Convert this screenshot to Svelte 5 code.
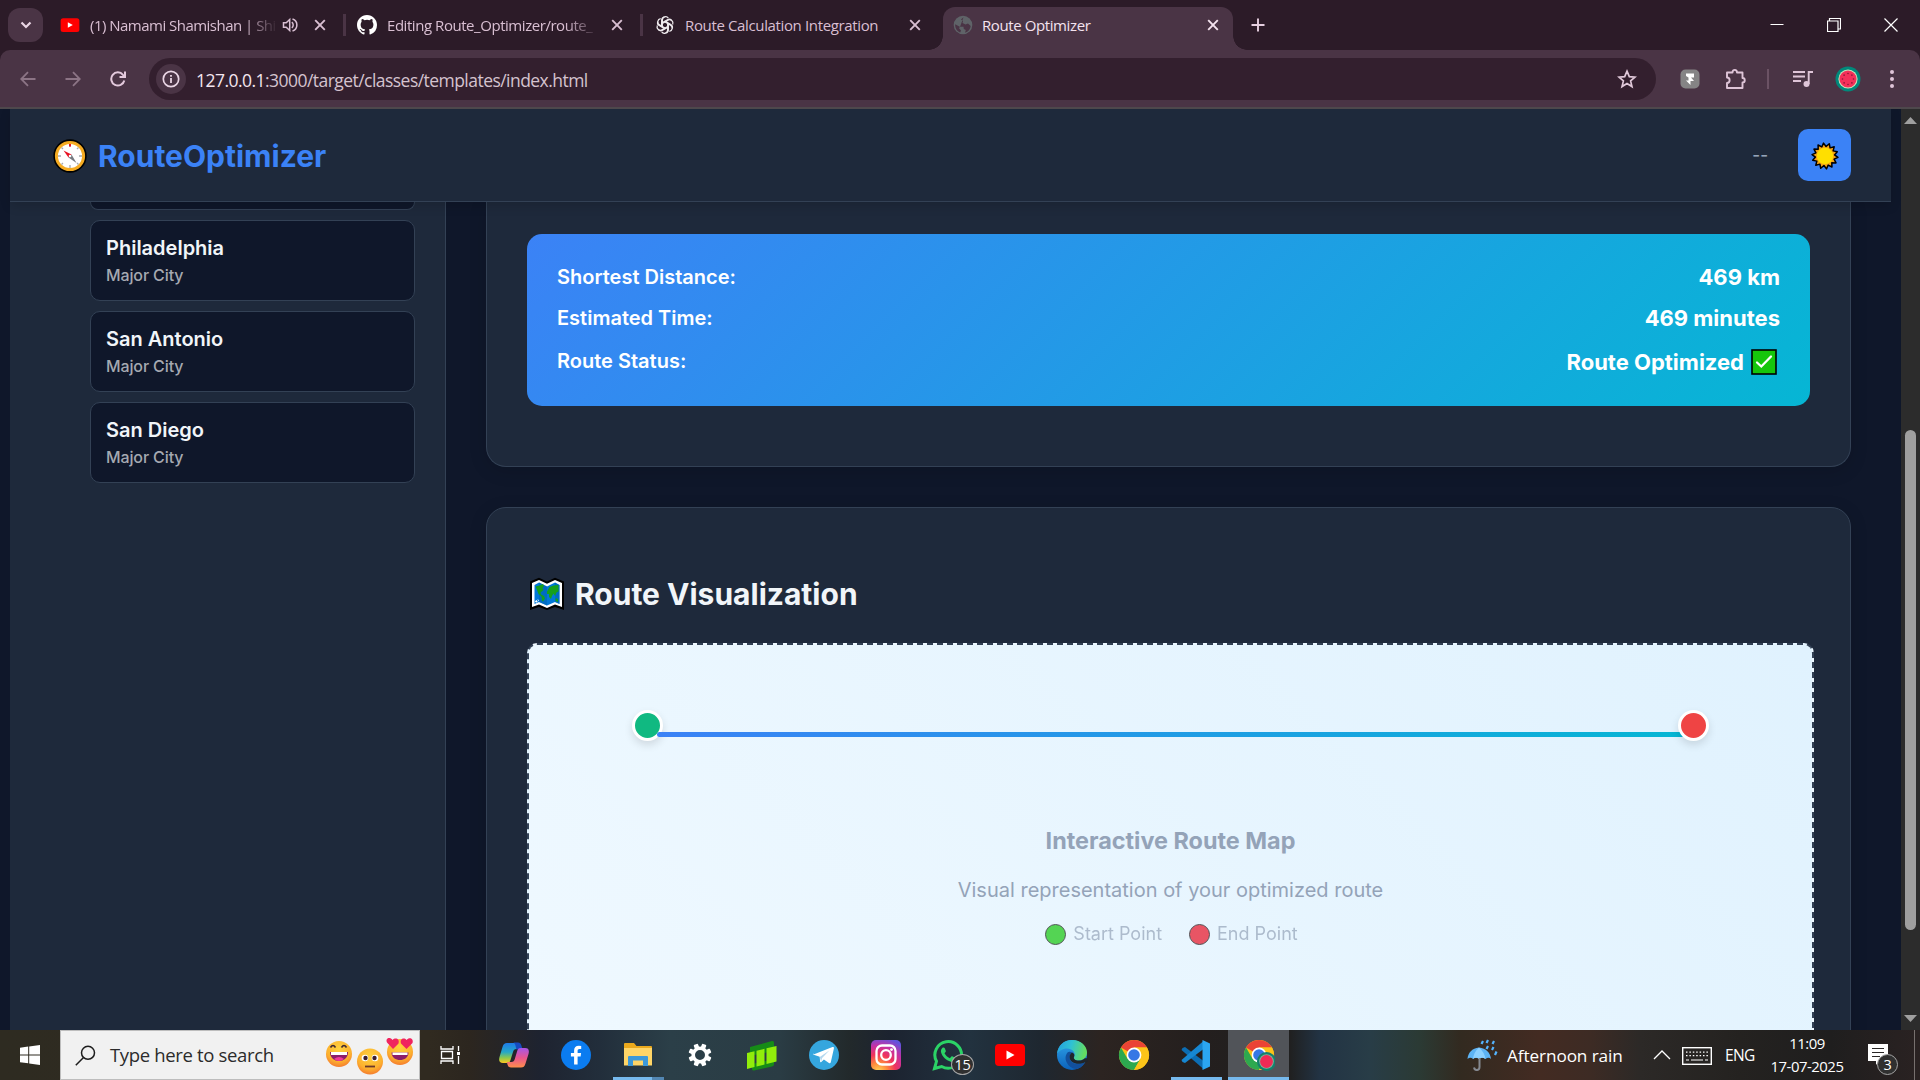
<script>
  const tabs = [
    { icon: 'youtube', title: '(1) Namami Shamishan | Shi', audio: true, width: 297, fade: true },
    { icon: 'github', title: 'Editing Route_Optimizer/route_', width: 297, fade: true },
    { icon: 'openai', title: 'Route Calculation Integration', width: 300 }
  ];
  const cities = ['Philadelphia', 'San Antonio', 'San Diego'];
  const results = [
    { label: 'Shortest Distance:', value: '469 km' },
    { label: 'Estimated Time:', value: '469 minutes' },
    { label: 'Route Status:', value: 'Route Optimized', done: true }
  ];
  const apps = ['copilot', 'facebook', 'explorer', 'gear', 'bars', 'telegram', 'instagram', 'whatsapp', 'youtube', 'edge', 'chrome', 'vscode', 'chromeProfile'];
  const teeth = [0, 45, 90, 135, 180, 225, 270, 315];
  const petals = [0, 60, 120, 180, 240, 300];
  const seeds = [0, 45, 90, 135, 180, 225, 270, 315];
  const sunPoints = Array.from({ length: 28 }, (_, i) => {
    const r = i % 2 ? 9.6 : 13;
    const a = (i * Math.PI) / 14 + 0.11;
    return `${(14 + r * Math.cos(a)).toFixed(2)},${(14 + r * Math.sin(a)).toFixed(2)}`;
  }).join(' ');
</script>

{#snippet closeIcon()}
  <svg class="close" width="12" height="12" viewBox="0 0 12 12"><path d="M1.200 1.200l9.600 9.600M10.800 1.200l-9.600 9.600" stroke="currentColor" stroke-width="1.900" /></svg>
{/snippet}

{#snippet chromeShape()}
  <circle cx="16" cy="16" r="15" fill="#fbc116" />
  <path d="M16 16L3 8.500A15 15 0 0 1 29 8.500H16Z" fill="#ea4335" />
  <path d="M3 8.500A15 15 0 0 0 16 31L22.500 19.700L16 16L9.500 19.700Z" fill="#2da94f" />
  <path d="M16 31A15 15 0 0 0 29 8.500H16L22.500 19.700Z" fill="#fcc419" />
  <circle cx="16" cy="16" r="7.400" fill="#fff" />
  <circle cx="16" cy="16" r="5.800" fill="#3578e5" />
{/snippet}

{#snippet icon(name)}
  {#if name === 'youtube'}
    <svg viewBox="0 0 32 32"><rect x="1" y="5" width="30" height="22" rx="4" fill="#f00" /><path d="M12.500 11.500v9l8-4.500z" fill="#fff" /></svg>
  {:else if name === 'github'}
    <svg viewBox="0 0 16 16"><path fill="#fff" d="M8 0C3.580 0 0 3.580 0 8c0 3.540 2.290 6.530 5.470 7.590.4.070.55-.17.55-.38 0-.19-.01-.82-.01-1.490-2.010.37-2.530-.49-2.690-.94-.09-.23-.48-.94-.82-1.130-.28-.15-.68-.52-.01-.53.63-.01 1.080.58 1.230.82.72 1.210 1.870.87 2.330.66.07-.52.28-.87.51-1.070-1.780-.2-3.640-.89-3.640-3.950 0-.87.31-1.590.82-2.150-.08-.2-.36-1.020.08-2.120 0 0 .67-.21 2.200.82a7.600 7.600 0 0 1 4 0c1.530-1.040 2.200-.82 2.200-.82.44 1.100.16 1.920.08 2.120.51.56.82 1.270.82 2.150 0 3.070-1.870 3.750-3.650 3.950.29.25.54.73.54 1.480 0 1.070-.01 1.930-.01 2.200 0 .21.15.46.55.38A8 8 0 0 0 16 8c0-4.420-3.580-8-8-8z" /></svg>
  {:else if name === 'openai'}
    <svg viewBox="0 0 24 24"><g fill="none" stroke="#f0ecef" stroke-width="1.500">
      {#each petals as a (a)}<path transform="rotate({a} 12 12)" d="M8.800 13.800V6.200a4 4 0 0 1 7.200-2.500M9.500 8.800l5.400-3.100a4 4 0 0 1 5 .8" />{/each}
    </g></svg>
  {:else if name === 'globe'}
    <svg viewBox="0 0 20 20"><circle cx="10" cy="10" r="9.300" fill="#5f6368" /><path d="M10.500 2.300L8 4.500l2 1.500-.5 2 3 1.500 2.500-1 2.700 2.500A8 8 0 0 1 12 17.700l.8-2.700-2-1-.3-2.300H6.800L2.200 9.300c-.4 4 2 7 5 8.200l.8-2L6 13.300l1-1.600" fill="#4a3445" /></svg>
  {:else if name === 'copilot'}
    <svg viewBox="0 0 32 32">
      <defs>
        <linearGradient id="cpA" x1="0" y1="0" x2="0" y2="1"><stop offset="0" stop-color="#1f7be8" /><stop offset=".45" stop-color="#24a7c9" /><stop offset=".75" stop-color="#8fc94b" /><stop offset="1" stop-color="#ffc81f" /></linearGradient>
        <linearGradient id="cpB" x1="0" y1="0" x2="0" y2="1"><stop offset="0" stop-color="#a656e8" /><stop offset=".5" stop-color="#e8558f" /><stop offset="1" stop-color="#ff8e4a" /></linearGradient>
      </defs>
      <path d="M9 4h10c2 0 3 1 3.500 3l1 3h-5c-2 0-3 1-3.500 3l-2.500 8c-.5 2-1.500 3-3.500 3H5c-3.500 0-4.500-2-3.500-6L4.500 8C5.500 5 6.500 4 9 4z" fill="url(#cpA)" />
      <path d="M17 3.500h3c2 0 3 1.500 3.500 3.500l1 3-6 .5c-1-3-.5-5-3-7z" fill="#174bc1" />
      <path d="M23 28.500H13c-2 0-3-1-3.500-3l-.7-2.500h4.500c2 0 3-1 3.500-3l2.400-8c.5-2 1.500-3 3.500-3H27c3.500 0 4.500 2 3.500 6l-3 9.500c-1 3-2 4-4.500 4z" fill="url(#cpB)" />
    </svg>
  {:else if name === 'facebook'}
    <svg viewBox="0 0 32 32"><circle cx="16" cy="16" r="15" fill="#0b7cf0" /><path d="M17.600 25.500v-8h3l.5-3.500h-3.500v-2.200c0-1.200.5-1.900 1.900-1.900h1.700V7a15 15 0 0 0-2.400-.2c-3 0-4.700 1.700-4.700 4.600V14h-3.200v3.500h3.200v8z" fill="#fff" /></svg>
  {:else if name === 'explorer'}
    <svg viewBox="0 0 32 32"><path d="M2 5q0-1 1-1h9l2.500 3H29q1 0 1 1v18H2z" fill="#eba91d" /><path d="M2 9h28v17.500H2z" fill="#ffd567" /><path d="M7 17h18q1 0 1 1v9h-5v-5.500H11V27H6v-9q0-1 1-1z" fill="#3c98d9" /></svg>
  {:else if name === 'gear'}
    <svg viewBox="0 0 32 32"><g fill="#fff">{#each teeth as a (a)}<rect x="13.700" y="4.500" width="4.600" height="5.500" rx="1" transform="rotate({a + 22.5} 16 16)" />{/each}</g><circle cx="16" cy="16" r="6.800" fill="none" stroke="#fff" stroke-width="3.600" /></svg>
  {:else if name === 'bars'}
    <svg viewBox="0 0 32 32"><path d="M4 8L26 2q2-.5 2 1.500V12L4 17zM6 25l22-5v5.500q0 1.500-2 2L8 31.500q-2 .3-2-1.500z" fill="#168b17" /><path d="M1 14l7.500-1.800V28L1 30zM10.500 11.700l8-1.900V25.500l-8 2zM20.500 9.300L30.500 7v15.500l-10 2.500z" fill="#91ed0b" /></svg>
  {:else if name === 'telegram'}
    <svg viewBox="0 0 32 32"><circle cx="16" cy="16" r="15" fill="#35a6de" /><path d="M5.500 15.500L24.500 8c1-.4 1.700.3 1.400 1.500l-3.100 13.700c-.3 1.100-1 1.300-1.900.8l-5-3.600-2.600 2.500c-.7.600-1.100.3-1.200-.5l-.4-4.600-6-2c-1-.3-1-1-.2-1.300z" fill="#fff" /><path d="M11.800 17.900l9.800-6.600-7.500 7.800-1 3.500z" fill="#b4d8ee" /></svg>
  {:else if name === 'instagram'}
    <svg viewBox="0 0 32 32"><defs><radialGradient id="ig" cx=".25" cy="1.050" r="1.150"><stop offset="0" stop-color="#ffd957" /><stop offset=".25" stop-color="#ff8b3d" /><stop offset=".5" stop-color="#f0345c" /><stop offset=".75" stop-color="#c431a5" /><stop offset="1" stop-color="#6154dd" /></radialGradient></defs><rect x="1" y="1" width="30" height="30" rx="5" fill="url(#ig)" /><rect x="6.500" y="6.500" width="19" height="19" rx="5.500" fill="none" stroke="#fff" stroke-width="2.300" /><circle cx="16" cy="16" r="4.800" fill="none" stroke="#fff" stroke-width="2.300" /><circle cx="21.500" cy="10.600" r="1.400" fill="#fff" /></svg>
  {:else if name === 'whatsapp'}
    <svg viewBox="0 0 32 32"><path d="M2.500 29.500l2-7.200A13.300 13.300 0 1 1 9.600 27.500z" fill="none" stroke="#2bd366" stroke-width="3" /><path d="M10.500 8.800c.7-.6 1.900-.5 2.300.4l1 2.500c.2.500 0 1-.3 1.400l-1 1.200c1.200 2.300 3 3.900 5.300 5l1.400-1.600c.4-.5.9-.6 1.500-.3l2.600 1.300c.6.300.7.7.5 1.400-.6 2-2.300 3.100-4.300 2.800-5-.9-9.700-5.600-10.500-9.800-.3-1.700.3-3.200 1.500-4.300z" fill="#2bd366" /></svg>
  {:else if name === 'edge'}
    <svg viewBox="0 0 32 32"><defs><linearGradient id="edA" x1="0" y1="0" x2="1" y2=".2"><stop offset="0" stop-color="#239ee0" /><stop offset=".5" stop-color="#2fc1d4" /><stop offset="1" stop-color="#63dc62" /></linearGradient><linearGradient id="edB" x1="0" y1="0" x2="0" y2="1"><stop offset="0" stop-color="#31a5ea" /><stop offset="1" stop-color="#0b62bb" /></linearGradient></defs><circle cx="16" cy="16" r="15" fill="url(#edB)" /><path d="M1 15C2 6 8 1 16 1c9 0 15 6 15 12.500 0 5-3.800 8-8.500 8-4 0-5.500-1.500-4.500-3.300 2.500-4.700-2-8.700-7-8.700C6.500 9.500 2.500 12 1 15z" fill="url(#edA)" /><path d="M11.500 13.500c-5 6 .5 16 9 16.500 4-1.200 6.700-3.500 8.500-6.800-7 4-15.500 1-15.500-5 0-2.200 1-3.500 2.700-4.700-1.700-1-3.700-1-4.700 0z" fill="#124f9c" /><path d="M18.300 17c-1.500 2.800.8 4.600 4.500 4.600 2.400 0 4.500-.8 6-2.300l3.200 0 0 3.500-3 .4c-6.500 3.500-15.500 1-15.500-5.200 0-2 1-3.500 2.700-4.500 1.700.8 2.500 2 2.100 3.500z" fill="#20252a" /></svg>
  {:else if name === 'chrome'}
    <svg viewBox="0 0 32 32">{@render chromeShape()}</svg>
  {:else if name === 'vscode'}
    <svg viewBox="0 0 32 32"><path d="M2.500 9L5 8l18.500 14v8L1.500 11z" fill="#0c6db3" /><path d="M2.500 23L5 24l18.500-14V2L1.500 21z" fill="#1687d2" /><path d="M22.500 1l7.500 3.500v23L22.500 31z" fill="#2ba6f1" /></svg>
  {:else if name === 'chromeProfile'}
    <svg viewBox="0 0 32 32">{@render chromeShape()}<circle cx="23.500" cy="22.500" r="9.500" fill="#14806d" /><circle cx="23.500" cy="22.500" r="7.300" fill="#7fb89a" /><circle cx="23.500" cy="22.500" r="6.400" fill="#f02a55" /></svg>
  {/if}
{/snippet}

<div class="screen">
  <div class="tabstrip">
    <div class="search-tabs">
      <svg width="12" height="8" viewBox="0 0 12 8"><path d="M1.500 1.500L6 6l4.500-4.500" fill="none" stroke="#ead6e5" stroke-width="2.200" /></svg>
    </div>
    <div class="tabs">
      {#each tabs as tab (tab.title)}
        <div class="tab" style:width="{tab.width}px">
          <span class="favicon">{@render icon(tab.icon)}</span>
          <span class="tab-title" class:fade={tab.fade}>{tab.title}</span>
          {#if tab.audio}
            <svg class="audio" width="16" height="16" viewBox="0 0 16 16"><path d="M1.500 5.800h2.700L7.700 2.500v11L4.200 10.200H1.500z" fill="none" stroke="#d9bfd2" stroke-width="1.500" /><path d="M9.800 5.200a3.500 3.500 0 0 1 0 5.600M10.500 2a6.300 6.300 0 0 1 0 12" fill="none" stroke="#d9bfd2" stroke-width="1.500" /></svg>
          {/if}
          {@render closeIcon()}
        </div>
      {/each}
      <div class="tab active">
        <span class="favicon">{@render icon('globe')}</span>
        <span class="tab-title">Route Optimizer</span>
        {@render closeIcon()}
      </div>
    </div>
    <svg class="plus" width="14" height="14" viewBox="0 0 14 14"><path d="M7 .5v13M.5 7h13" stroke="#e6cfe0" stroke-width="1.900" /></svg>
    <div class="window-controls">
      <svg width="14" height="14" viewBox="0 0 14 14"><path d="M.5 6.500h13" stroke="#fff" /></svg>
      <svg width="14" height="14" viewBox="0 0 14 14"><path d="M.5 3h10.500v10.500H.5zM2.500 3V.5h11V11H11" fill="none" stroke="#fff" stroke-width="1.200" /></svg>
      <svg width="14" height="14" viewBox="0 0 14 14"><path d="M.5 .5l13 13M13.500 .5l-13 13" stroke="#fff" stroke-width="1.200" /></svg>
    </div>
  </div>

  <div class="toolbar">
    <div class="nav">
      <svg width="16" height="16" viewBox="0 0 16 16"><path d="M15.500 8H1.500M8 1.200L1.200 8 8 14.800" fill="none" stroke="#8c7485" stroke-width="1.800" /></svg>
      <svg width="16" height="16" viewBox="0 0 16 16"><path d="M.5 8h14M8 1.200L14.800 8 8 14.800" fill="none" stroke="#8c7485" stroke-width="1.800" /></svg>
      <svg width="16" height="16" viewBox="0 0 16 16"><path d="M14.300 9.500A6.600 6.600 0 1 1 13 3.800L15 6M15 .5V6H9.500" fill="none" stroke="#e3c9dc" stroke-width="2" /></svg>
    </div>
    <div class="omnibox">
      <span class="info"><svg width="18" height="18" viewBox="0 0 18 18"><circle cx="9" cy="9" r="7.700" fill="none" stroke="#ead6e5" stroke-width="1.700" /><path d="M9 8v5M9 5v1.700" stroke="#ead6e5" stroke-width="1.800" /></svg></span>
      <span class="url"><b>127.0.0.1</b>:3000/target/classes/templates/index.html</span>
      <svg class="star" width="20" height="20" viewBox="0 0 20 20"><path d="M10 2.200l2.300 5.400 5.700.5-4.400 3.800 1.400 5.700-5-3-5 3 1.400-5.700L2 8.100l5.700-.5z" fill="none" stroke="#e0c8d9" stroke-width="1.700" /></svg>
    </div>
    <div class="actions">
      <svg width="20" height="20" viewBox="0 0 20 20"><rect x=".5" y=".5" width="19" height="19" rx="5" fill="#858485" /><path d="M6 4.500h8v4h-3l3 3.500h-3.500v4L6 11.500h2.500V8.500L6 7z" fill="#fff" /></svg>
      <svg width="22" height="22" viewBox="0 0 22 22"><path d="M2 4.500h5.500c0-3.500 4.500-3.500 4.500 0h5.500v5.500c3 0 3 4.500 0 4.500V20H2v-5c3.500 0 3.500-5.500 0-5.500z" fill="none" stroke="#dfc5d8" stroke-width="1.900" stroke-linejoin="round" /></svg>
      <span class="divider"></span>
      <svg width="20" height="18" viewBox="0 0 20 18"><path d="M0 2h12M0 6.500h12M0 11h8" stroke="#dfc5d8" stroke-width="1.900" /><path d="M15.700 14V2H20" fill="none" stroke="#dfc5d8" stroke-width="1.900" /><circle cx="13.500" cy="14" r="3" fill="#dfc5d8" /></svg>
      <svg width="26" height="26" viewBox="0 0 26 26"><circle cx="13" cy="13" r="12.500" fill="#00897b" /><circle cx="13" cy="13" r="9.600" fill="#c9e6bd" /><circle cx="13" cy="13" r="8.600" fill="#f4305a" /><g fill="#8d1838">{#each seeds as a (a)}<circle cx="13" cy="7.500" r=".8" transform="rotate({a} 13 13)" />{/each}</g></svg>
      <svg width="6" height="20" viewBox="0 0 6 20"><g fill="#dfc5d8"><circle cx="3" cy="3" r="2" /><circle cx="3" cy="10" r="2" /><circle cx="3" cy="17" r="2" /></g></svg>
    </div>
  </div>

  <div class="viewport">
    <div class="page">
      <header>
        <div class="logo">
          <svg width="34" height="34" viewBox="0 0 34 34"><circle cx="17" cy="17" r="16.700" fill="#000" /><circle cx="17" cy="17" r="13.600" fill="#fff" stroke="#f5ab22" stroke-width="3" /><path d="M17 5v3M17 26v3M5 17h3M26 17h3M8.500 8.500l1.500 1.500M24 24l1.500 1.500M8.500 25.500L10 24M24 10l1.500-1.500" stroke="#a5a9b0" stroke-width="1.300" /><path d="M17 5v2.500" stroke="#e81224" stroke-width="2" /><path d="M10.500 11.500l8 4-3 3z" fill="#e81224" /><path d="M23.500 24l-8-5.500 3-3z" fill="#777b82" /><circle cx="17" cy="17" r="1.300" fill="#fff" /></svg>
          <span>RouteOptimizer</span>
        </div>
        <div class="header-right">
          <span class="status">--</span>
          <button aria-label="Toggle theme"><svg width="28" height="28" viewBox="0 0 28 28"><polygon points={sunPoints} fill="#f7a516" stroke="#000" stroke-width="1.500" stroke-linejoin="round" /><circle cx="14" cy="14" r="8.200" fill="#ffdf00" /></svg></button>
        </div>
      </header>

      <div class="columns">
        <aside>
          <div class="city clipped"></div>
          {#each cities as city (city)}
            <div class="city"><strong>{city}</strong><span>Major City</span></div>
          {/each}
        </aside>
        <main>
          <section class="card first">
            <div class="results">
              {#each results as row (row.label)}
                <div class="row" class:tall={row.done}>
                  <span class="label">{row.label}</span>
                  <span class="value">{row.value}{#if row.done}<svg width="26" height="26" viewBox="0 0 26 26"><rect x="1" y="1" width="24" height="24" fill="#16c60c" stroke="#000" stroke-width="1.600" /><path d="M6 13.500l4.300 4L20 7.500" fill="none" stroke="#fff" stroke-width="2.300" stroke-linecap="round" /></svg>{/if}</span>
                </div>
              {/each}
            </div>
          </section>
          <section class="card second">
            <h2>
              <svg width="34" height="34" viewBox="0 0 34 34"><path d="M0 4.500L9 .8l8 3.700L25 .8l9 3.700V33l-9-3-8 3-8-3-9 3z" fill="#000" /><path d="M2 6l7-3 8 3.800L25 3l7 3v24l-7-2.500L17 31l-8-3.500L2 30z" fill="#fff" /><path d="M4.500 8L9 5.500l8 4v19L9 25l-4.500 2zM25 5.500L29.500 8v19L25 25l-8 3.500v-19z" fill="#0078d7" /><path d="M9 5.500l8 4v19L9 25zM25 5.500L29.500 8v19L25 25z" fill="#0063b1" opacity=".55" /><path d="M5.500 9.500l4-1 3.500-1.500 1 2-1.500 2 1 2-3 2.500.5 2 3 1.500 1 2.500-2 3-1-1-.5-4-3-2.500-1.500-4zM17 14.500l2.500-4.500 4-1.500 5-.5v6.500l-2 1-1.500 3.500-1.500-2.500-1.500 2.500-1 3-2-2v-3h-2z" fill="#16a01b" /><path d="M25.500 21l2.500 1v3l-2.500-1z" fill="#16a01b" /><path d="M5.500 25l3-2" stroke="#fff" stroke-width="2" stroke-dasharray="2 1" /></svg>
              <span>Route Visualization</span>
            </h2>
            <div class="map">
              <div class="pin start"></div>
              <div class="route-line"></div>
              <div class="pin end"></div>
              <div class="map-copy">
                <h3>Interactive Route Map</h3>
                <p>Visual representation of your optimized route</p>
                <div class="legend">
                  <span><i class="dot green"></i>Start Point</span>
                  <span><i class="dot red"></i>End Point</span>
                </div>
              </div>
            </div>
          </section>
        </main>
      </div>
    </div>
    <div class="scrollbar">
      <svg width="13" height="7" viewBox="0 0 13 7"><path d="M0 7L6.500 0 13 7z" fill="#9f9f9f" /></svg>
      <div class="thumb"></div>
      <svg width="13" height="7" viewBox="0 0 13 7"><path d="M0 0l6.500 7L13 0z" fill="#9f9f9f" /></svg>
    </div>
  </div>

  <div class="taskbar">
    <div class="winstart"><svg width="20" height="20" viewBox="0 0 20 20"><path d="M0 2.700L8.200 1.600v7.800H0zM9.200 1.500L20 0v9.400H9.200zM0 10.400h8.200v7.900L0 17.200zM9.200 10.400H20V20L9.200 18.400z" fill="#fff" /></svg></div>
    <div class="search">
      <svg width="21" height="21" viewBox="0 0 21 21"><circle cx="13" cy="7.800" r="6.500" fill="none" stroke="#1d1d1d" stroke-width="1.500" /><path d="M8.300 12.700L.8 20.200" stroke="#1d1d1d" stroke-width="1.500" /></svg>
      <span>Type here to search</span>
      <svg class="faces" width="90" height="40" viewBox="0 0 90 40">
        <defs><radialGradient id="face" cx=".5" cy=".3" r=".8"><stop offset="0" stop-color="#ffd23e" /><stop offset=".6" stop-color="#fcb12f" /><stop offset="1" stop-color="#f2662e" /></radialGradient></defs>
        <circle cx="14" cy="19" r="13" fill="url(#face)" /><path d="M5.500 12.500q2.500-4 5 0M16.500 12.500q2.500-4 5 0" fill="none" stroke="#402a32" stroke-width="1.600" /><path d="M5 17h18c0 12-18 12-18 0z" fill="#8b1d6b" /><path d="M6 17h16v3H6z" fill="#fff" /><path d="M9 24q5-4 10 0-5 4-10 0z" fill="#f0389a" />
        <circle cx="45" cy="26.500" r="13" fill="url(#face)" /><circle cx="40" cy="23" r="3.300" fill="#fff" /><circle cx="50" cy="23" r="3.300" fill="#fff" /><circle cx="40.500" cy="23" r="2.200" fill="#3b2030" /><circle cx="49.500" cy="23" r="2.200" fill="#3b2030" /><path d="M40 31.500h10" stroke="#6b3929" stroke-width="1.800" />
        <circle cx="75" cy="17" r="13" fill="url(#face)" /><path d="M66.500 17.500h17c0 10-17 10-17 0z" fill="#8b1d6b" /><path d="M67.500 17.500h15v2.500h-15z" fill="#fff" /><path d="M68 14L62 7.500C60 3 65 1.500 67.500 5c3-3 7.500-1 6 3.500zM81.500 14L76 8.500C74.500 4 79 2 81.500 5c3-3.500 7.500-1 6 3z" fill="#f0245f" />
      </svg>
    </div>
    <div class="taskview"><svg width="21" height="20" viewBox="0 0 21 20"><path d="M1 1v3h12V1M1 19v-3h12v3M1.500 6.500h11v7h-11zM18.500 1v5M18.500 11v8" fill="none" stroke="#fff" stroke-width="1.300" /><rect x="17" y="7" width="3" height="3" fill="#fff" /></svg></div>
    {#each apps as app (app)}
      <div class="app {app}">
        {@render icon(app)}
        {#if app === 'whatsapp'}<span class="badge">15</span>{/if}
      </div>
    {/each}
    <div class="tray">
      <div class="weather">
        <svg width="32" height="32" viewBox="0 0 32 32"><path d="M12 8.500C5 9 1 14 .5 20q3-2.500 5.500 0 3-2.500 6 0 3-2.500 6.500 0 3-2.500 5.500 0C23.500 14 19 9 12 8.500z" fill="#5db3f4" /><path d="M12 8.500C8 12 6.500 16 6 20q3-2.500 6 0 3-2.500 6.500 0C18 16 16 12 12 8.500z" fill="#8cd0ff" /><path d="M12.500 19v9c0 4-5 4-5.500.5" fill="none" stroke="#858990" stroke-width="2" /><path d="M16 2l-1.500 3M21 1l-1.500 3M27 2l-1.500 3M21 7l-1.500 3M26.500 8L25 11M29.500 12.500L28 16" stroke="#54b4ff" stroke-width="2.200" /></svg>
        <span>Afternoon rain</span>
      </div>
      <svg class="chevron" width="18" height="10" viewBox="0 0 18 10"><path d="M1 9l8-8 8 8" fill="none" stroke="#fff" stroke-width="1.300" /></svg>
      <svg class="keyboard" width="30" height="18" viewBox="0 0 30 18"><rect x=".7" y=".7" width="28.600" height="16.600" fill="none" stroke="#fff" stroke-width="1.400" /><path d="M4 5.200h22M4 8.700h22" stroke="#fff" stroke-width="1.200" stroke-dasharray="1.500 1.900" /><path d="M4 13h3M9 13h12M23 13h3" stroke="#fff" stroke-width="1.200" /></svg>
      <span class="lang">ENG</span>
      <div class="clock"><span>11:09</span><span>17-07-2025</span></div>
      <div class="notify">
        <svg width="20" height="22" viewBox="0 0 20 22"><path d="M0 0h20v17h-9l-3 4v-4H0z" fill="#fff" /><path d="M4 4.500h12M4 8.500h12M4 12.500h8" stroke="#292626" stroke-width="1.200" /></svg>
        <span class="badge">3</span>
      </div>
      <span class="desktop-edge"></span>
    </div>
  </div>
</div>

<style>
  :global(body) { overflow: hidden; background: #0f172a; }
  .screen { width: 1920px; height: 1080px; display: flex; flex-direction: column; overflow: hidden; font-family: 'Open Sans', 'Noto Sans', sans-serif; }
  .screen * { box-sizing: border-box; }
  svg { display: block; flex: none; }

  .tabstrip { position: relative; z-index: 1; height: 50px; flex: none; display: flex; align-items: center; padding-left: 8px; background: #2c1b28; }
  .search-tabs { width: 35px; height: 34px; border-radius: 12px; background: #4a3445; display: flex; align-items: center; justify-content: center; }
  .tabs { display: flex; align-self: stretch; align-items: center; padding-left: 6px; }
  .tab { position: relative; height: 36px; padding: 0 17px 0 11px; display: flex; align-items: center; color: #d9bfd2; font-size: 15px; letter-spacing: -0.45px; }
  .tab:nth-child(-n + 2) { border-right: 3px solid transparent; border-image: linear-gradient(transparent 22%, #4a3445 22%, #4a3445 78%, transparent 78%) 1; }
  .tab:nth-child(3) { padding-left: 12px; padding-right: 22px; letter-spacing: -0.36px; }
  .favicon { width: 20px; flex: none; margin-right: 10px; }
  .favicon :global(svg) { width: 20px; height: 20px; }
  .tab-title { flex: 1; min-width: 0; white-space: nowrap; overflow: hidden; }
  .fade { margin-right: 12px; mask-image: linear-gradient(90deg, #000 calc(100% - 34px), transparent); }
  .tab:first-child .tab-title { margin-right: 4px; letter-spacing: -0.52px; }
  .audio { margin-right: 16px; }
  .tab.active { width: 290px; height: 43px; padding: 0 14px 7px 10px; align-self: flex-end; background: #4a3445; border-radius: 12px 12px 0 0; color: #f4e3ef; letter-spacing: -0.4px; }
  .tab.active .favicon { margin-right: 9px; }
  .tab.active::before, .tab.active::after { content: ''; position: absolute; bottom: 0; width: 14px; height: 14px; }
  .tab.active::before { left: -14px; background: radial-gradient(circle at 0 0, transparent 13.5px, #4a3445 14px); }
  .tab.active::after { right: -14px; background: radial-gradient(circle at 100% 0, transparent 13.5px, #4a3445 14px); }
  .plus { margin-left: 18px; }
  .window-controls { margin-left: auto; display: flex; gap: 43px; padding-right: 22px; }

  .toolbar { position: relative; height: 59px; flex: none; display: flex; align-items: center; padding: 1px 25px 0 20px; background: #4a3445; border-bottom: 2px solid #4e484c; border-radius: 10px 10px 0 0; box-shadow: 0 -12px 0 #2c1b28; }
  .nav { display: flex; gap: 29px; }
  .omnibox { width: 1507px; height: 42px; margin: 0 24px 0 23px; border-radius: 21px; background: #331f2e; display: flex; align-items: center; padding: 0 19px 0 7px; }
  .info { width: 30px; height: 30px; border-radius: 50%; background: #4a3445; display: grid; place-items: center; }
  .url { flex: 1; margin-left: 10px; padding-top: 1px; color: #d5c3cf; font-size: 17.5px; letter-spacing: -0.54px; }
  .url b { font-weight: 400; color: #f4e6f0; }
  .actions { display: flex; flex: 1; align-items: center; }
  .actions > :nth-child(2) { margin-left: 25px; }
  .divider { width: 2px; height: 20px; margin: 0 24px 0 20px; background: #6b5264; }
  .actions > :nth-child(5) { margin-left: 22px; }
  .actions > :nth-child(6) { margin-left: auto; }

  .viewport { height: 921px; flex: none; display: flex; overflow: hidden; background: #0f172a; font-family: Inter, sans-serif; }
  .page { width: 1901px; padding: 0 10px; display: flex; flex-direction: column; }
  header { position: relative; z-index: 2; height: 93px; flex: none; display: flex; align-items: center; justify-content: space-between; padding: 0 40px 0 43px; background: #1e293b; border-bottom: 1px solid #334155; box-shadow: 0 4px 10px rgba(0, 0, 0, 0.14); }
  .logo { display: flex; align-items: center; gap: 11px; padding-top: 2px; color: #3b82f6; font-size: 30px; font-weight: 700; }
  .header-right { display: flex; align-items: center; gap: 30px; color: #94a3b8; font-size: 17px; font-weight: 500; }
  button { width: 53px; height: 52px; padding: 1px 0 0; border: 0; border-radius: 10px; background: #3b82f6; display: grid; place-items: center; }
  .columns { flex: 1; min-height: 0; display: flex; }
  aside { width: 436px; flex: none; padding: 0 30px 0 80px; background: #1e293b; border-right: 1px solid #334155; }
  .city { height: 81px; margin-bottom: 10px; padding: 14px 15px; display: flex; flex-direction: column; background: #0f172a; border: 1px solid #334155; border-radius: 10px; }
  .city.clipped { height: 8px; border-top: 0; border-radius: 0 0 10px 10px; padding: 0; }
  .city strong { color: #f1f5f9; font-size: 20px; line-height: 26px; font-weight: 600; }
  .city span { margin-top: 2px; color: #a5a9b1; font-size: 16px; line-height: 24px; font-weight: 500; letter-spacing: -0.12px; }
  main { flex: 1; min-width: 0; padding: 0 40px; display: flex; flex-direction: column; gap: 40px; }
  .card { flex: none; background: #1e293b; border: 1px solid #334155; border-radius: 20px; box-shadow: 0 4px 18px rgba(0, 0, 0, 0.14); padding: 0 40px; }
  .first { height: 265px; border-top: 0; border-radius: 0 0 20px 20px; padding-top: 32px; }
  .results { height: 172px; padding: 22px 30px; border-radius: 15px; background: linear-gradient(135deg, #3b82f6, #06b6d4); color: #fff; }
  .row { height: 41px; display: flex; align-items: center; justify-content: space-between; }
  .row.tall { height: 45px; }
  .row.tall .value { padding-top: 2px; }
  .label { font-size: 20px; font-weight: 600; }
  .value { display: flex; align-items: center; gap: 7px; font-size: 22px; font-weight: 700; }
  .value svg { margin-right: 3px; }
  .second { height: 640px; padding-top: 67px; }
  h2 { height: 38px; margin: 0 0 30px 3px; display: flex; align-items: center; gap: 11px; color: #f1f5f9; font-size: 30px; font-weight: 700; }
  .map { position: relative; width: 1287px; height: 500px; border: 2px dashed #334155; border-radius: 10px; background: linear-gradient(45deg, #f0f9ff, #e0f2fe); }
  .route-line { position: absolute; left: 128px; right: 128px; top: 87px; height: 5px; border-radius: 3px; background: linear-gradient(90deg, #3b82f6, #06b6d4); }
  .pin { position: absolute; top: 65px; width: 31px; height: 31px; border: 3px solid #fff; border-radius: 50%; box-shadow: 0 4px 8px rgba(0, 0, 0, 0.12); }
  .start { left: 103px; background: #10b981; }
  .end { right: 103px; background: #ef4444; }
  .map-copy { padding-top: 180px; display: flex; flex-direction: column; align-items: center; color: #94a3b8; }
  h3 { margin: 0; font-size: 23.4px; line-height: 32px; font-weight: 700; }
  p { margin: 17px 0 0; font-size: 20px; line-height: 32px; }
  .legend { margin: 14px 0 0 2px; display: flex; gap: 27px; font-size: 18px; line-height: 28px; opacity: 0.7; }
  .legend span { display: flex; align-items: center; gap: 7px; }
  .dot { width: 21px; height: 21px; border: 1.5px solid #111; border-radius: 50%; }
  .green { background: #16c60c; }
  .red { background: #e81224; }
  .scrollbar { width: 19px; padding: 8px 3px 8px; display: flex; flex-direction: column; align-items: center; background: #2c2c2c; }
  .thumb { width: 11px; height: 500px; margin-top: 306px; margin-bottom: auto; border-radius: 6px; background: #9f9f9f; }

  .taskbar { height: 50px; flex: none; display: flex; background: linear-gradient(90deg, #2e2b21 0, #302a20 430px, #2c261f 470px, #1e2330 540px, #222e3b 600px, #2b3f48 670px, #2a3c44 780px, #22292b 850px, #1c2330 890px, #22323f 970px, #1e2730 1040px, #2c2421 1100px, #241f1e 1200px, #202020 1290px, #223344 1320px, #283d47 1370px, #2b3a34 1420px, #322a20 1460px, #432b22 1540px, #3d2b24 1590px, #2c2927 1640px, #242220 1740px, #1f1e1e 1830px, #2a2222 1920px); color: #fff; }
  .winstart { width: 60px; display: grid; place-items: center; }
  .search { width: 360px; display: flex; align-items: center; padding: 0 4px 0 14px; background: #f1f1f1; border: 1px solid #bdbdbd; color: #2b2b2b; font-size: 18.5px; letter-spacing: -0.34px; }
  .search span { margin-left: 14px; padding-bottom: 2px; white-space: nowrap; }
  .faces { margin-left: auto; }
  .taskview { width: 61px; margin-right: 2px; display: grid; place-items: center; }
  .app { position: relative; width: 62px; display: grid; place-items: center; }
  .app :global(svg) { width: 32px; height: 32px; }
  .explorer::after, .vscode::after { content: ''; position: absolute; left: 6px; right: 5px; bottom: 0; height: 3px; background: #76b9ed; }
  .explorer::after { background: linear-gradient(90deg, #76b9ed 39px, #5387b3 39px); }
  .chromeProfile { margin-left: 1px; width: 61px; background: #515459; border-bottom: 3px solid #76b9ed; }
  .chromeProfile :global(svg) { margin-top: 3px; }
  .badge { position: absolute; width: 23px; height: 21px; border: 1px solid #a5a5a5; border-radius: 50%; background: #303030; font: 14.5px/19px 'Open Sans', sans-serif; letter-spacing: -0.4px; text-align: center; color: #fff; }
  .whatsapp .badge { left: 34px; top: 24px; }
  .tray { flex: 1; display: flex; align-items: center; padding-left: 178px; }
  .weather { width: 186px; display: flex; align-items: center; gap: 8px; font-size: 17.2px; letter-spacing: -0.1px; white-space: nowrap; }
  .keyboard { margin-left: 11px; margin-top: 1px; }
  .lang { margin-left: 13px; width: 30px; font-size: 15.5px; letter-spacing: -0.6px; }
  .clock { width: 78px; margin-left: 13px; display: flex; flex-direction: column; align-items: center; font-size: 14.9px; line-height: 23px; letter-spacing: -0.48px; }
  .notify { position: relative; margin-left: 22px; }
  .notify .badge { left: 9px; top: 10px; width: 21px; }
  .desktop-edge { margin-left: auto; margin-right: 5px; width: 1px; height: 50px; background: #77706e; }
</style>
